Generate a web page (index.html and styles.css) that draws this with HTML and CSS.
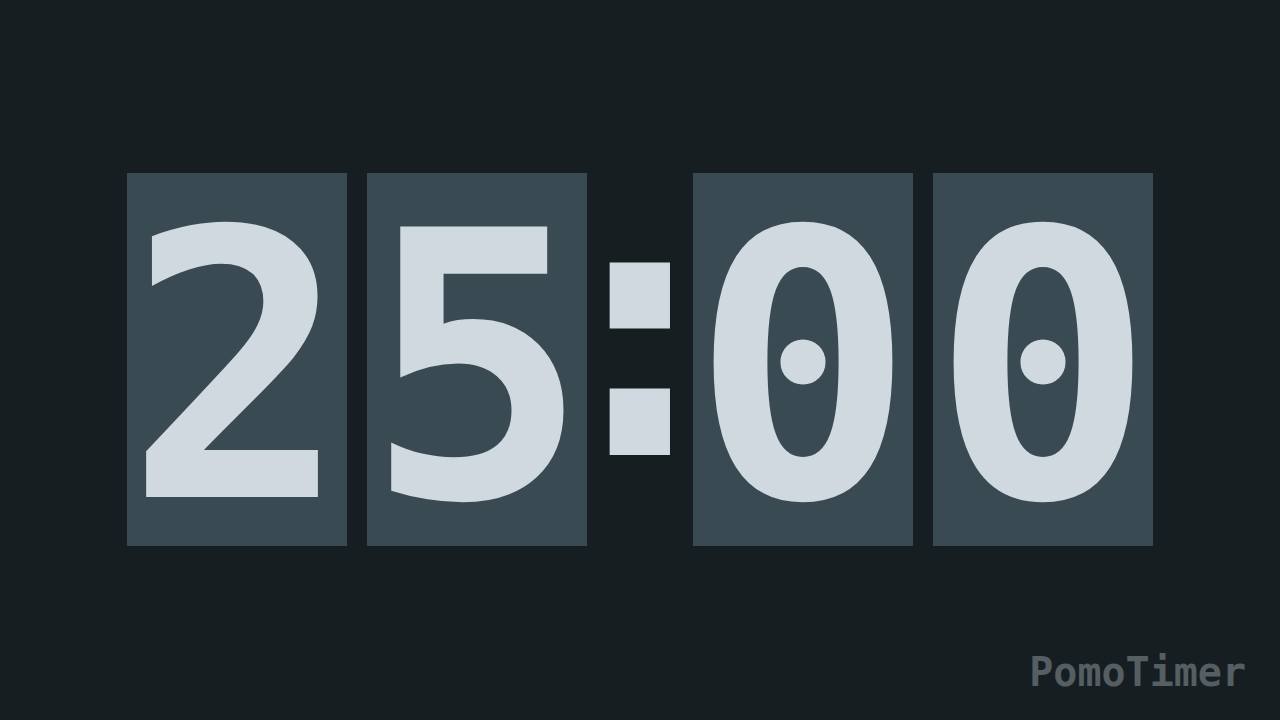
FILE: index.html
```html
<!DOCTYPE html>
<html lang="en">
<head>
<meta charset="utf-8">
<title>PomoTimer</title>
<link rel="stylesheet" href="styles.css">
</head>
<body>
<main class="screen">
  <div class="clock">
    <div class="card"><span class="digit">2</span></div>
    <div class="card"><span class="digit">5</span></div>
    <div class="colon"><span class="sep">:</span></div>
    <div class="card"><span class="digit">0</span></div>
    <div class="card"><span class="digit">0</span></div>
  </div>
  <div class="brand">PomoTimer</div>
</main>
</body>
</html>
```
FILE: styles.css
```css
html, body {
  margin: 0;
  padding: 0;
  width: 100%;
  height: 100%;
  background: #171e21;
  overflow: hidden;
}
.screen {
  position: relative;
  width: 1280px;
  height: 720px;
  display: flex;
  align-items: center;
  justify-content: center;
  font-family: "DejaVu Sans Mono", monospace;
  font-weight: bold;
}
.clock {
  display: flex;
  align-items: stretch;
  gap: 20px;
  margin-top: -1px;
}
.card {
  width: 220px;
  height: 373px;
  background: #394a53;
  display: flex;
  justify-content: center;
  align-items: center;
  overflow: visible;
}
.colon {
  width: 66px;
  height: 373px;
  display: flex;
  justify-content: center;
  align-items: center;
}
.digit, .sep {
  font-size: 371px;
  line-height: 1;
  color: #d0d8e0;
  display: block;
}
.digit {
  padding-top: 18px;
}
.sep {
  padding-bottom: 66px;
}
.brand {
  position: absolute;
  right: 34px;
  bottom: 28px;
  font-size: 40px;
  line-height: 1;
  color: #555f63;
}
```
